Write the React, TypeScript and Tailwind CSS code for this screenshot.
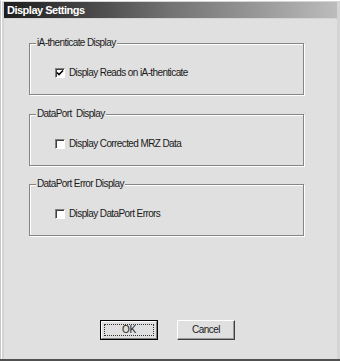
import * as React from 'react';

type GroupProps = {
  legend: string;
  label: string;
  checked?: boolean;
  className?: string;
};

function CheckBox({ checked }: { checked?: boolean }) {
  return (
    <span className="flex h-[10px] w-[10px] shrink-0 items-center justify-center border-t border-l border-t-[#808080] border-l-[#808080] border-r border-b border-r-white border-b-white bg-white shadow-[inset_1px_1px_0_#404040]">
      {checked && (
        <svg width="8" height="8" viewBox="0 0 8 8" className="block">
          <polyline points="1,3.5 3,5.5 7,1.5" fill="none" stroke="#000" strokeWidth="1.6" />
        </svg>
      )}
    </span>
  );
}

function Group({ legend, label, checked, className }: GroupProps) {
  return (
    <div
      className={
        'relative h-[52px] w-[275px] border border-[#858585] shadow-[1px_1px_0_#ffffff,inset_1px_1px_0_#ffffff] ' +
        (className ?? '')
      }
    >
      <span className="absolute left-[6px] top-[-7px] whitespace-pre bg-[#e0e0e0] px-[1px] text-[10px] leading-[12px] tracking-[-0.6px] text-[#1a1a1a]">
        {legend}
      </span>
      <div className="flex items-center gap-[4px] pl-[25px] pt-[23px]">
        <CheckBox checked={checked} />
        <span className="text-[10px] leading-[12px] tracking-[-0.6px] text-[#1a1a1a]">{label}</span>
      </div>
    </div>
  );
}

export default function App() {
  return (
    <div className="h-[361px] w-[340px] font-['Liberation_Sans',Arial,sans-serif] bg-[#505050]">
      <div className="flex h-[359px] w-[340px] flex-col border-t border-l border-t-white border-l-[#c8c8c8] bg-[#d4d4d4] pr-[3px]">
        <div className="flex h-full flex-col border-l border-l-white pl-[2px] pt-[1px]">
          <div className="flex h-[16px] items-center bg-linear-to-r from-[#1e1e1e] via-[#737373] to-[#bcbcbc] pl-[3px]">
            <span className="text-[11px] font-bold leading-[12px] tracking-[-0.5px] text-white">Display Settings</span>
          </div>
          <div className="mt-[1px] flex flex-1 flex-col bg-[#e0e0e0] pl-[25px] pt-[24px]">
            <Group legend="iA-thenticate Display" label="Display Reads on iA-thenticate" checked />
            <Group legend="DataPort  Display" label="Display Corrected MRZ Data" className="mt-[19px]" />
            <Group legend="DataPort Error Display" label="Display DataPort Errors" className="mt-[18px]" />
            <div className="mt-[84px] flex gap-[19px] pl-[71px]">
              <button className="flex h-[20px] w-[58px] items-center justify-center border border-black bg-[#e0e0e0] p-0">
                <span className="flex h-full w-full items-center justify-center border-t border-l border-t-white border-l-white border-r border-b border-r-[#808080] border-b-[#808080] p-[2px]">
                  <span className="flex h-full w-full items-center justify-center border border-dotted border-[#333] text-[10px] leading-[12px] tracking-[-0.3px] text-[#1a1a1a]">
                    OK
                  </span>
                </span>
              </button>
              <button className="flex h-[20px] w-[58px] items-center justify-center border-t border-l border-t-white border-l-white border-r border-b border-r-[#404040] border-b-[#404040] bg-[#e0e0e0] p-0 shadow-[inset_-1px_-1px_0_#9a9a9a]">
                <span className="text-[10px] leading-[12px] tracking-[-0.5px] text-[#1a1a1a]">Cancel</span>
              </button>
            </div>
          </div>
        </div>
      </div>
    </div>
  );
}
